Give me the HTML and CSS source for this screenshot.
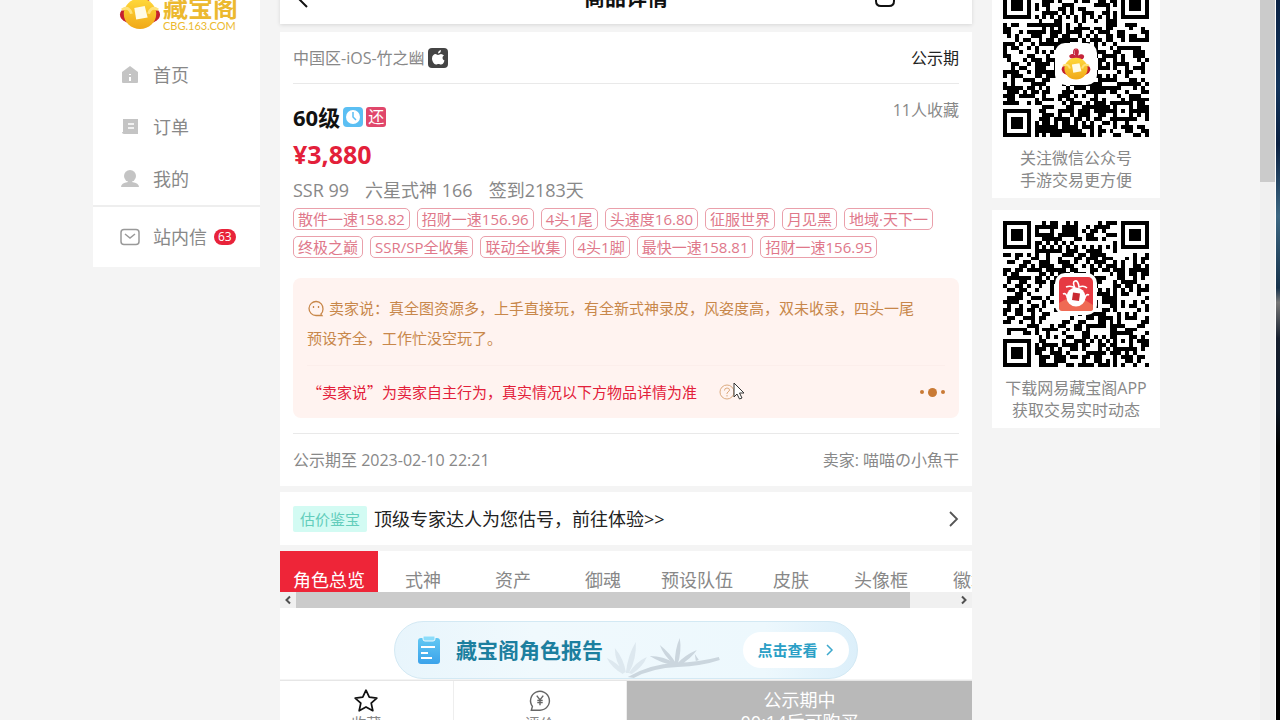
FILE: index.html
```html
<!DOCTYPE html>
<html lang="zh-CN">
<head>
    <meta charset="UTF-8">
    <meta name="viewport" content="width=device-width, initial-scale=1.0">
    <title>商品详情</title>
    <link rel="stylesheet" href="styles.css">
</head>
<body>
    <!-- Shared coin artwork -->
    <svg class="defs" width="0" height="0" aria-hidden="true">
        <defs>
            <linearGradient id="gold" x1="0" y1="0" x2="0" y2="1">
                <stop offset="0" stop-color="#ffd93b"/>
                <stop offset="1" stop-color="#f0a818"/>
            </linearGradient>
            <symbol id="coin" viewBox="0 0 44 48">
                <path d="M14 15c-3-3-2-5 1-6 2-1 5 0 6 2-1-4-2-8 1-9s5 3 3 9c2-2 6-3 8-1s1 5-3 7z" fill="#c5253c"/>
                <path d="M19 9c-1-4 0-8 3-8s4 4 2 8" fill="none" stroke="#c5253c" stroke-width="2"/>
                <ellipse cx="22" cy="31" rx="21" ry="11" fill="#c5202f"/>
                <ellipse cx="22" cy="30" rx="17" ry="16" fill="url(#gold)"/>
                <path d="M3 26c6-4 9 0 10 4M41 26c-6-4-9 0-10 4" fill="none" stroke="#ffe278" stroke-width="3"/>
                <path d="M16 24l11-2 3 12-12 2z" fill="#fffbe8"/>
            </symbol>
        </defs>
    </svg>

    <div class="viewport">
        <aside class="sidebar">
            <div class="logo">
                <svg class="logo-coin" viewBox="0 0 44 48"><use href="#coin"/></svg>
                <div class="logo-text">
                    <div class="logo-name">藏宝阁</div>
                    <div class="logo-url">CBG.163.COM</div>
                </div>
            </div>
            <nav>
                <a class="menu-item" href="#">
                    <svg class="menu-icon" viewBox="0 0 20 20"><path d="M10 1l8 6v10q0 1-1 1H3q-1 0-1-1V7z" fill="#c4c4c4"/><path d="M10 9v1M10 12v4" stroke="#fff" stroke-width="2"/></svg>
                    首页
                </a>
                <a class="menu-item" href="#">
                    <svg class="menu-icon" viewBox="0 0 20 20"><path d="M3 2h15v15H4q-2 0-2-2h1z" fill="#c4c4c4"/><path d="M8 7h6M8 11h6" stroke="#fff" stroke-width="1.5"/></svg>
                    订单
                </a>
                <a class="menu-item" href="#">
                    <svg class="menu-icon" viewBox="0 0 20 20"><circle cx="10" cy="7" r="6" fill="#c4c4c4"/><path d="M8 11h4v2q7 1 7 5H1q0-4 7-5z" fill="#c4c4c4"/></svg>
                    我的
                </a>
                <a class="menu-item message" href="#">
                    <svg class="menu-icon" viewBox="0 0 20 20" fill="none" stroke="#999" stroke-width="1.5"><rect x="1" y="2.5" width="18" height="15" rx="3"/><path d="M5 7l5 4 5-4"/></svg>
                    站内信
                    <span class="count">63</span>
                </a>
            </nav>
        </aside>

        <main class="main">
            <header class="topbar">
                <svg class="back" viewBox="0 0 12 20" fill="none" stroke="#111" stroke-width="2"><path d="M11 1L2 10l9 9"/></svg>
                <h1>商品详情</h1>
                <svg class="share" viewBox="0 0 22 22" fill="none" stroke="#111" stroke-width="2"><path d="M2 8v7q0 5 5 5h8q5 0 5-5V8"/></svg>
            </header>

            <div class="content">
                <section class="card detail">
                    <div class="row server">
                        <span class="server-name">中国区-iOS-竹之幽
                            <svg class="badge-icon" viewBox="0 0 20 20"><rect width="20" height="20" rx="4" fill="#444"/><path d="M13 2q0 3-3 3.500q0-3 3-3.500zM10 7c1 0 2-1 3-1s2 .5 3 1.500c-2 1-2 4 .5 5-1 3-2 4-3.500 4-1 0-1.500-.5-2.500-.5s-1.500.5-2.500.5C6 16.500 4 13 4 10.500 4 7.500 6 6 7.500 6c1 0 1.500 1 2.500 1z" fill="#fff"/></svg>
                        </span>
                        <span class="status">公示期</span>
                    </div>
                    <div class="row summary">
                        <h2>60级
                            <svg class="badge-icon" viewBox="0 0 20 20"><rect width="20" height="20" rx="4" fill="#5bbff3"/><circle cx="10" cy="10" r="7" fill="#fff"/><path d="M10 5v5l3 3" fill="none" stroke="#5bbff3" stroke-width="1.500"/></svg>
                            <span class="return-badge">还</span>
                        </h2>
                        <span class="favs">11人收藏</span>
                    </div>
                    <div class="price">¥3,880</div>
                    <div class="stats"><span>SSR 99</span><span>六星式神 166</span><span>签到2183天</span></div>
                    <ul class="tags">
                        <li>散件一速158.82</li>
                        <li>招财一速156.96</li>
                        <li>4头1尾</li>
                        <li>头速度16.80</li>
                        <li>征服世界</li>
                        <li>月见黑</li>
                        <li>地域·天下一</li>
                        <li>终极之巅</li>
                        <li>SSR/SP全收集</li>
                        <li>联动全收集</li>
                        <li>4头1脚</li>
                        <li>最快一速158.81</li>
                        <li>招财一速156.95</li>
                    </ul>
                    <div class="seller-box">
                        <p class="seller-say">
                            <svg class="say-icon" viewBox="0 0 18 18" fill="none" stroke="#c8874a" stroke-width="1.300"><path d="M15 15.500H9A7 7 0 1 1 16 9q0 3-2 5z"/><path d="M6.500 6v2M11.500 6v2"/></svg>
                            卖家说：真全图资源多，上手直接玩，有全新式神录皮，风姿度高，双未收录，四头一尾<br>预设齐全，工作忙没空玩了。
                        </p>
                        <div class="row notice">
                            <span class="notice-text">“卖家说”为卖家自主行为，真实情况以下方物品详情为准</span>
                            <span class="help">
                                <svg viewBox="0 0 16 16" width="16" height="16" fill="none" stroke="#dcab80"><circle cx="8" cy="8" r="7"/><path d="M5.500 6.500q0-2.500 2.500-2.500t2.500 2q0 1-1.500 2t-1 2M8 11v1.500"/></svg>
                                <svg class="cursor" viewBox="0 0 12 18"><path d="M1 1v14l3-3 2.500 5 2.500-1-2.500-5H11z" fill="#fff" stroke="#333"/></svg>
                            </span>
                            <span class="dots"><i></i><i class="big"></i><i></i></span>
                        </div>
                    </div>
                    <div class="row seller">
                        <span>公示期至 2023-02-10 22:21</span>
                        <span>卖家: 喵喵の小魚干</span>
                    </div>
                </section>

                <a class="card appraise" href="#">
                    <span class="appraise-tag">估价鉴宝</span>
                    <span>顶级专家达人为您估号，前往体验&gt;&gt;</span>
                    <svg class="arrow" viewBox="0 0 10 16" fill="none" stroke="#555" stroke-width="1.800"><path d="M1 1l7 7-7 7"/></svg>
                </a>

                <section class="card">
                    <div class="tabs">
                        <button class="active">角色总览</button>
                        <button>式神</button>
                        <button>资产</button>
                        <button>御魂</button>
                        <button>预设队伍</button>
                        <button>皮肤</button>
                        <button>头像框</button>
                        <button>徽章</button>
                    </div>
                    <div class="hscroll">
                        <svg viewBox="0 0 16 16" fill="none" stroke="#505050" stroke-width="2"><path d="M10 4.500L6.500 8l3.500 3.500"/></svg>
                        <div class="hscroll-track"><div class="hscroll-thumb"></div></div>
                        <svg viewBox="0 0 16 16" fill="none" stroke="#505050" stroke-width="2"><path d="M6 4.500L9.500 8 6 11.500"/></svg>
                    </div>
                    <div class="report">
                        <svg class="report-icon" viewBox="0 0 24 28"><defs><linearGradient id="clip" x1="0" y1="0" x2="0" y2="1"><stop offset="0" stop-color="#62c8f3"/><stop offset="1" stop-color="#3ba2ea"/></linearGradient></defs><rect x="1" y="2" width="22" height="26" rx="3" fill="url(#clip)"/><path d="M6 0h12v3q0 2-2 2H8q-2 0-2-2z" fill="#8bdcfa" stroke="#eef8fd"/><path d="M4 11h14M4 17h7M4 22h11" stroke="#fff" stroke-width="2"/></svg>
                        <strong>藏宝阁角色报告</strong>
                        <svg class="bamboo" viewBox="0 0 124 48">
                            <path d="M24 47q22-13 48-14 24-1 43-6l1 3q-18 6-42 7-26 1-44 11zM92 31l-1-7 4 6zM71 34q0-15 5-26 2 13-2 26zM70 34Q60 26 56 15q10 8 16 18zM73 34q8-9 20-14-6 9-17 15zM69 35q-12-2-23-9 14 0 24 7z" fill="#cbd6de"/>
                            <path d="M22 43q2-18 10-31 1 17-7 31zM20 43Q11 32 11 18q9 11 11 24zM19 44Q8 38 3 28q11 5 18 14zM25 43q7-11 18-16-4 10-15 17z" fill="#dde8ef"/>
                        </svg>
                        <button class="report-btn">点击查看
                            <svg viewBox="0 0 8 14" width="8" height="14" fill="none" stroke="#3ea9cd" stroke-width="1.500"><path d="M1 2l5 5-5 5"/></svg>
                        </button>
                    </div>
                </section>
            </div>

            <footer class="bottom-bar">
                <button class="action">
                    <svg viewBox="0 0 24 24" width="26" height="26" fill="none" stroke="#111" stroke-width="1.600" stroke-linejoin="round"><path d="M12 2l3 6.500 7 .8-5.200 4.700 1.500 7L12 17.500 5.700 21l1.500-7L2 9.300l7-.8z"/></svg>
                    收藏
                </button>
                <button class="action">
                    <svg viewBox="0 0 24 24" width="26" height="26" fill="none" stroke="#666" stroke-width="1.300"><path d="M4 20.500l1-3.500A8.700 8.700 0 1 1 12 20.500z"/><path d="M9 7l3 4 3-4M12 11v5M9.500 11.500h5M9.500 13.500h5"/></svg>
                    评价
                </button>
                <button class="buy" disabled>公示期中<br>00:14后可购买</button>
            </footer>
        </main>

        <aside class="codes">
            <div class="code-card first">
                <div class="qr">
                    <svg class="qr-code" data-seed="163" viewBox="0 0 37 37"></svg>
                    <span class="qr-logo"><svg viewBox="0 0 44 48" width="30" height="33"><use href="#coin"/></svg></span>
                </div>
                <p>关注微信公众号<br>手游交易更方便</p>
            </div>
            <div class="code-card">
                <div class="qr">
                    <svg class="qr-code" data-seed="60" viewBox="0 0 37 37"></svg>
                    <span class="qr-logo"><svg viewBox="0 0 34 34" width="34" height="34"><rect width="34" height="34" rx="5" fill="#e63a42"/><path d="M0 26l9-5 8 7 9-5 8 5v4q0 2-3 2H3q-3 0-3-3z" fill="#ef6a54"/><path d="M7 10q5-2 9 1-3-6 0-7t4 6q5-2 8 1M4 17q3-2 5 5M30 18q-3-2-5 5" fill="none" stroke="#fff" stroke-width="1.600"/><circle cx="17" cy="20" r="9.500" fill="#fff"/><path d="M14 15.500l7 1-1 7.500-7-1z" fill="#c92a31"/></svg></span>
                </div>
                <p>下载网易藏宝阁APP<br>获取交易实时动态</p>
            </div>
        </aside>
    </div>
    <div class="vscroll"><div class="vscroll-thumb"></div></div>
    <div class="desktop"></div>

    <script src="qr.js"></script>
</body>
</html>
```

FILE: styles.css
```css
* {
    box-sizing: border-box;
}
body {
    margin: 0;
    height: 100vh;
    display: flex;
    overflow: hidden;
    background: #f4f4f4;
    color: #888;
    font-family: "Open Sans", "Noto Sans CJK SC", sans-serif;
    font-size: 16px;
    line-height: 22px;
}
h1, h2, p, ul {
    margin: 0;
    padding: 0;
}
a {
    color: inherit;
    text-decoration: none;
}
button {
    border: 0;
    padding: 0;
    background: none;
    color: inherit;
    font: inherit;
}
.defs {
    position: absolute;
}
.viewport {
    flex: 1;
    min-width: 0;
    display: flex;
    align-items: flex-start;
    gap: 20px;
    padding: 0 100px 0 93px;
}

/* Left menu */
.sidebar {
    width: 167px;
    background: #fff;
}
.logo {
    height: 49px;
    padding: 0 0 18px 26px;
    display: flex;
    align-items: flex-end;
    gap: 2px;
}
.logo-coin {
    width: 42px;
    height: 46px;
}
.logo-text {
    color: #ecb92f;
    width: 76px;
}
.logo-name {
    font-size: 25px;
    line-height: 28px;
    font-weight: bold;
}
.logo-url {
    font-family: Lato, sans-serif;
    font-size: 11px;
    line-height: 10px;
}
.menu-item {
    display: flex;
    align-items: center;
    height: 52px;
    padding-left: 27px;
    font-size: 18px;
}
.menu-icon {
    width: 20px;
    height: 20px;
    margin-right: 13px;
}
.message {
    height: 62px;
    border-top: 2px solid #eee;
}
.count {
    margin-left: 7px;
    padding: 0 4px;
    border-radius: 8px;
    background: #e8233a;
    color: #fff;
    font-size: 12px;
    line-height: 16px;
}

/* Middle column */
.main {
    flex: 1;
    min-width: 0;
    height: 100vh;
    display: flex;
    flex-direction: column;
}
.topbar {
    flex: none;
    height: 48px;
    margin-top: -24px;
    display: grid;
    grid-template-columns: 1fr auto 1fr;
    align-items: end;
    padding: 0 16px;
    padding-bottom: 16px;
    background: #fff;
    box-shadow: 0 1px 4px rgba(0, 0, 0, 0.12);
}
.topbar h1 {
    color: #111;
    font-size: 21px;
    line-height: 22px;
}
.back {
    width: 12px;
    height: 20px;
}
.share {
    width: 22px;
    height: 22px;
    justify-self: end;
    margin-right: 60px;
}
.content {
    flex: 1;
    min-height: 0;
    overflow: hidden;
    padding-top: 8px;
    display: flex;
    flex-direction: column;
    gap: 6px;
}
.card {
    flex: none;
    background: #fff;
}
.row {
    display: flex;
    justify-content: space-between;
}
.detail {
    padding: 0 13px;
}
.server {
    height: 52px;
    align-items: center;
    border-bottom: 1px solid #e9e9e9;
}
.server-name, h2 {
    display: flex;
    align-items: center;
    gap: 3px;
}
.status {
    color: #222;
}
.badge-icon {
    width: 20px;
    height: 20px;
}
.summary {
    height: 52px;
    padding-top: 15px;
}
h2 {
    height: 36px;
    color: #111;
    font-size: 22px;
}
.return-badge {
    width: 20px;
    height: 20px;
    border-radius: 3px;
    background: #e0476b;
    color: #fff;
    font-weight: normal;
    font-size: 16px;
    line-height: 20px;
    text-align: center;
}
.price {
    color: #e3203a;
    font-size: 25px;
    font-weight: bold;
    line-height: 36px;
}
.stats {
    display: flex;
    gap: 16px;
    font-size: 18px;
    line-height: 36px;
}
.tags {
    display: flex;
    flex-wrap: wrap;
    gap: 6px 7px;
    list-style: none;
}
.tags li {
    padding: 0 4px;
    border: 1px solid #eaa0ab;
    border-radius: 5px;
    color: #e0788a;
    font-size: 15px;
    line-height: 20px;
}
.seller-box {
    margin: 20px 0 15px;
    padding: 15px 14px 0;
    border-radius: 8px;
    background: #fff3f0;
    font-size: 15px;
}
.seller-say {
    color: #c8874a;
    line-height: 30px;
    white-space: nowrap;
}
.say-icon {
    width: 18px;
    height: 18px;
    vertical-align: -4px;
}
.notice {
    align-items: center;
    height: 53px;
    margin-top: 12px;
    border-top: 1px solid #fceeeb;
}
.notice-text {
    color: #e3203a;
    font-family: "Noto Sans CJK SC", sans-serif;
}
.help {
    position: relative;
    display: flex;
    flex: 1;
    padding-left: 22px;
}
.cursor {
    position: absolute;
    top: -2px;
    left: 36px;
    width: 12px;
    height: 18px;
}
.dots {
    display: flex;
    align-items: center;
    gap: 4px;
}
.dots i {
    width: 4px;
    height: 4px;
    border-radius: 50%;
    background: #c97a35;
}
.dots .big {
    width: 9px;
    height: 9px;
}
.seller {
    height: 53px;
    align-items: center;
    border-top: 1px solid #e9e9e9;
}
.appraise {
    height: 53px;
    padding: 0 13px;
    display: flex;
    align-items: center;
    gap: 7px;
    color: #222;
    font-size: 18px;
}
.appraise-tag {
    padding: 0 7px;
    border-radius: 2px;
    background: #d3fbf3;
    color: #62cdbb;
    font-size: 15px;
    line-height: 26px;
}
.arrow {
    width: 10px;
    height: 16px;
    margin-left: auto;
}
.tabs {
    display: flex;
    height: 41px;
    overflow: hidden;
}
.tabs button {
    flex: none;
    min-width: 90px;
    padding: 17px 13px 0;
    font-size: 18px;
    line-height: 24px;
}
.tabs .active {
    background: #ee2538;
    color: #fff;
}
.hscroll {
    display: flex;
    height: 16px;
    background: #f0f0f0;
}
.hscroll svg {
    width: 16px;
}
.hscroll-track {
    flex: 1;
}
.hscroll-thumb {
    width: 93%;
    height: 16px;
    background: #cbcbcb;
}
.report {
    display: flex;
    align-items: center;
    width: 67%;
    height: 58px;
    margin: 13px auto 0 114px;
    padding: 0 8px 0 22px;
    border: 1px solid #d3e9f4;
    border-radius: 29px;
    background: linear-gradient(90deg, #e8f5fc, #f0f9fd 30%, #edf8fd 80%, #dceffa);
}
.report-icon {
    width: 24px;
    height: 28px;
    margin-right: 15px;
}
.report strong {
    color: #1c7f9f;
    font-size: 21px;
}
.bamboo {
    flex: 1;
    height: 48px;
    align-self: flex-end;
}
.report-btn {
    display: flex;
    align-items: center;
    gap: 8px;
    height: 36px;
    margin-left: 14px;
    padding: 0 15px;
    border-radius: 18px;
    background: #fff;
    color: #2b9fc6;
    font-size: 15px;
    font-weight: bold;
}
.bottom-bar {
    flex: 0 0 40px;
    display: flex;
    align-items: flex-start;
    overflow: hidden;
    background: #fff;
    border-top: 1px solid #e6e6e6;
}
.action {
    flex: 1;
    height: 60px;
    display: flex;
    flex-direction: column;
    align-items: center;
    padding-top: 7px;
    border-right: 1px solid #eee;
    font-size: 15px;
    line-height: 18px;
}
.buy {
    flex: 2;
    height: 60px;
    padding: 8px 0;
    background: #b9b9b9;
    color: #fff;
    font-size: 18px;
}

/* QR codes */
.codes {
    width: 168px;
    display: flex;
    flex-direction: column;
    gap: 12px;
}
.code-card {
    height: 218px;
    padding-bottom: 7px;
    display: flex;
    flex-direction: column;
    align-items: center;
    justify-content: flex-end;
    background: #fff;
    text-align: center;
}
.first {
    height: 198px;
}
.qr {
    position: relative;
    width: 146px;
    height: 146px;
    margin-bottom: 10px;
}
.qr-code {
    display: block;
    width: 100%;
    height: 100%;
}
.qr-logo {
    position: absolute;
    inset: 52px;
    display: flex;
    align-items: center;
    justify-content: center;
    border-radius: 10px;
    background: #fff;
}

/* Window scrollbar and the strip beside it */
.vscroll {
    width: 16px;
    background: #f0f0f0;
    border-right: 1px solid #fff;
}
.vscroll-thumb {
    height: 182px;
    background: #cbcbcb;
}
.desktop {
    width: 4px;
    background: linear-gradient(#0b2345, #14355c 12%, #0b2142 20%, #3d6883 30%, #17334c 40%, #777 42%, #17202f 47%, #0c1725 57%, #000 62%);
}
```

FILE: qr.js
```js
const SIZE = 37;

// Small seeded generator, so each code keeps its pattern between loads
function makeRandom(seed) {
    return () => {
        seed = (seed + 0x6D2B79F5) | 0;
        let t = Math.imul(seed ^ (seed >>> 15), 1 | seed);
        t = (t + Math.imul(t ^ (t >>> 7), 61 | t)) ^ t;
        return ((t ^ (t >>> 14)) >>> 0) / 4294967296;
    };
}

// Ring and centre of a square marker
function inMarker(x, y, left, top, size) {
    const dx = x - left;
    const dy = y - top;
    if (dx < 0 || dy < 0 || dx >= size || dy >= size) return null;
    const edge = Math.min(dx, dy, size - 1 - dx, size - 1 - dy);
    return edge !== 1;
}

function isDark(x, y, rand) {
    const corners = [[0, 0], [SIZE - 7, 0], [0, SIZE - 7]];
    for (const [left, top] of corners) {
        const marker = inMarker(x, y, left, top, 7);
        if (marker !== null) return marker;
        if (x >= left - 1 && x <= left + 7 && y >= top - 1 && y <= top + 7) return false;
    }
    const align = inMarker(x, y, 28, 28, 5);
    if (align !== null) return align;
    if (x === 6 || y === 6) return (x + y) % 2 === 0;
    return rand < 0.52;
}

document.querySelectorAll('.qr-code').forEach(svg => {
    const random = makeRandom(Number(svg.dataset.seed));
    let d = '';
    for (let y = 0; y < SIZE; y++) {
        for (let x = 0; x < SIZE; x++) {
            if (isDark(x, y, random())) d += `M${x} ${y}h1v1h-1z`;
        }
    }
    const path = document.createElementNS('http://www.w3.org/2000/svg', 'path');
    path.setAttribute('d', d);
    path.setAttribute('shape-rendering', 'crispEdges');
    svg.appendChild(path);
});
```
